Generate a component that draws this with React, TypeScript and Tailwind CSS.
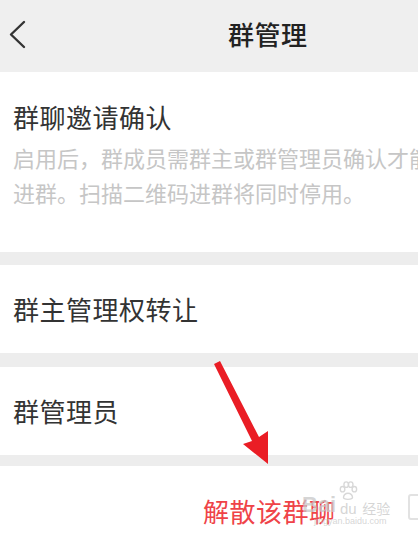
import React from "react";

const font = { fontFamily: '"Noto Sans CJK SC", "Noto Sans", sans-serif' };

export default function App() {
  return (
    <div className="relative w-[418px] h-[536px] overflow-hidden bg-white" style={font}>
      {/* Header */}
      <div className="h-[72px] bg-[#efefef] flex items-center pb-[4px]">
        <svg className="ml-[8px] w-[20px] h-[30px]" viewBox="0 0 20 30" fill="none">
          <path d="M16 3 L3 15.5 L16 28" stroke="#333" strokeWidth="2.4" strokeLinecap="round" strokeLinejoin="round" />
        </svg>
        <div className="ml-[200px] text-[26px] leading-[30px] text-[#222] font-medium tracking-[0.5px]">群管理</div>
      </div>

      {/* Section 1 */}
      <div className="h-[180px] bg-white pl-[13px] pt-[30px] overflow-hidden flex flex-col">
        <div className="text-[26px] leading-[30px] text-[#333] tracking-[0.5px]">群聊邀请确认</div>
        <div className="mt-[8px] text-[22px] leading-[35px] text-[#c6c6c6] whitespace-nowrap flex flex-col">
          <div>启用后，群成员需群主或群管理员确认才能</div>
          <div>进群。扫描二维码进群将同时停用。</div>
        </div>
      </div>
      <div className="h-[13px] bg-[#ededed]" />

      {/* Section 2 */}
      <div className="h-[88px] bg-white flex items-center pl-[13px]">
        <div className="text-[26px] leading-[30px] text-[#333] tracking-[0.5px]">群主管理权转让</div>
      </div>
      <div className="h-[14px] bg-[#ededed]" />

      {/* Section 3 */}
      <div className="h-[88px] bg-white flex items-center pl-[13px]">
        <div className="text-[26px] leading-[30px] text-[#333] tracking-[0.5px]">群管理员</div>
      </div>
      <div className="h-[11px] bg-[#ededed]" />

      {/* Bottom */}
      <div className="h-[70px] bg-white pl-[203px] pt-[30px] flex items-start">
        <div className="text-[26px] leading-[30px] text-[#ef4348] tracking-[0.5px]">解散该群聊</div>
      </div>

      {/* Red arrow annotation */}
      <svg className="absolute left-0 top-0 pointer-events-none" width="418" height="536" viewBox="0 0 418 536">
        <polygon points="214,364 220,361 259,437 268,431 268,464 243,444 252,441" fill="#ea1d25" />
      </svg>

      {/* Watermark overlay */}
      <div
        className="absolute left-[302px] top-[478px] pointer-events-none flex flex-col items-start"
        style={{ fontFamily: '"Liberation Sans", sans-serif', color: "rgba(200,200,200,0.75)" }}
      >
        <div className="flex items-end gap-[1px]">
          <span className="text-[22px] leading-[22px] font-bold mt-[16px]">Bai</span>
          <div className="flex flex-col items-center">
            <svg width="22" height="20" viewBox="0 0 22 22" fill="none" stroke="#d8d8d8" strokeWidth="1.5">
              <ellipse cx="5" cy="9" rx="2.5" ry="3" />
              <ellipse cx="9" cy="4" rx="2.5" ry="3" />
              <ellipse cx="14" cy="4" rx="2.5" ry="3" />
              <ellipse cx="18" cy="9" rx="2.5" ry="3" />
              <path d="M6 18 C7 12 15 12 16 18 C16 21 6 21 6 18 Z" />
            </svg>
            <span className="text-[15px] leading-[15px]">du</span>
          </div>
          <span className="text-[14px] leading-[16px] ml-[2px]" style={font}>经验</span>
        </div>
        <span className="ml-[12px] text-[9px] leading-[10px]">jingyan.baidu.com</span>
      </div>
      <div className="absolute left-[408px] top-[494px] w-[14px] h-[26px] border-2 border-[#e2e2e2] rounded-[3px] pointer-events-none" />
    </div>
  );
}
